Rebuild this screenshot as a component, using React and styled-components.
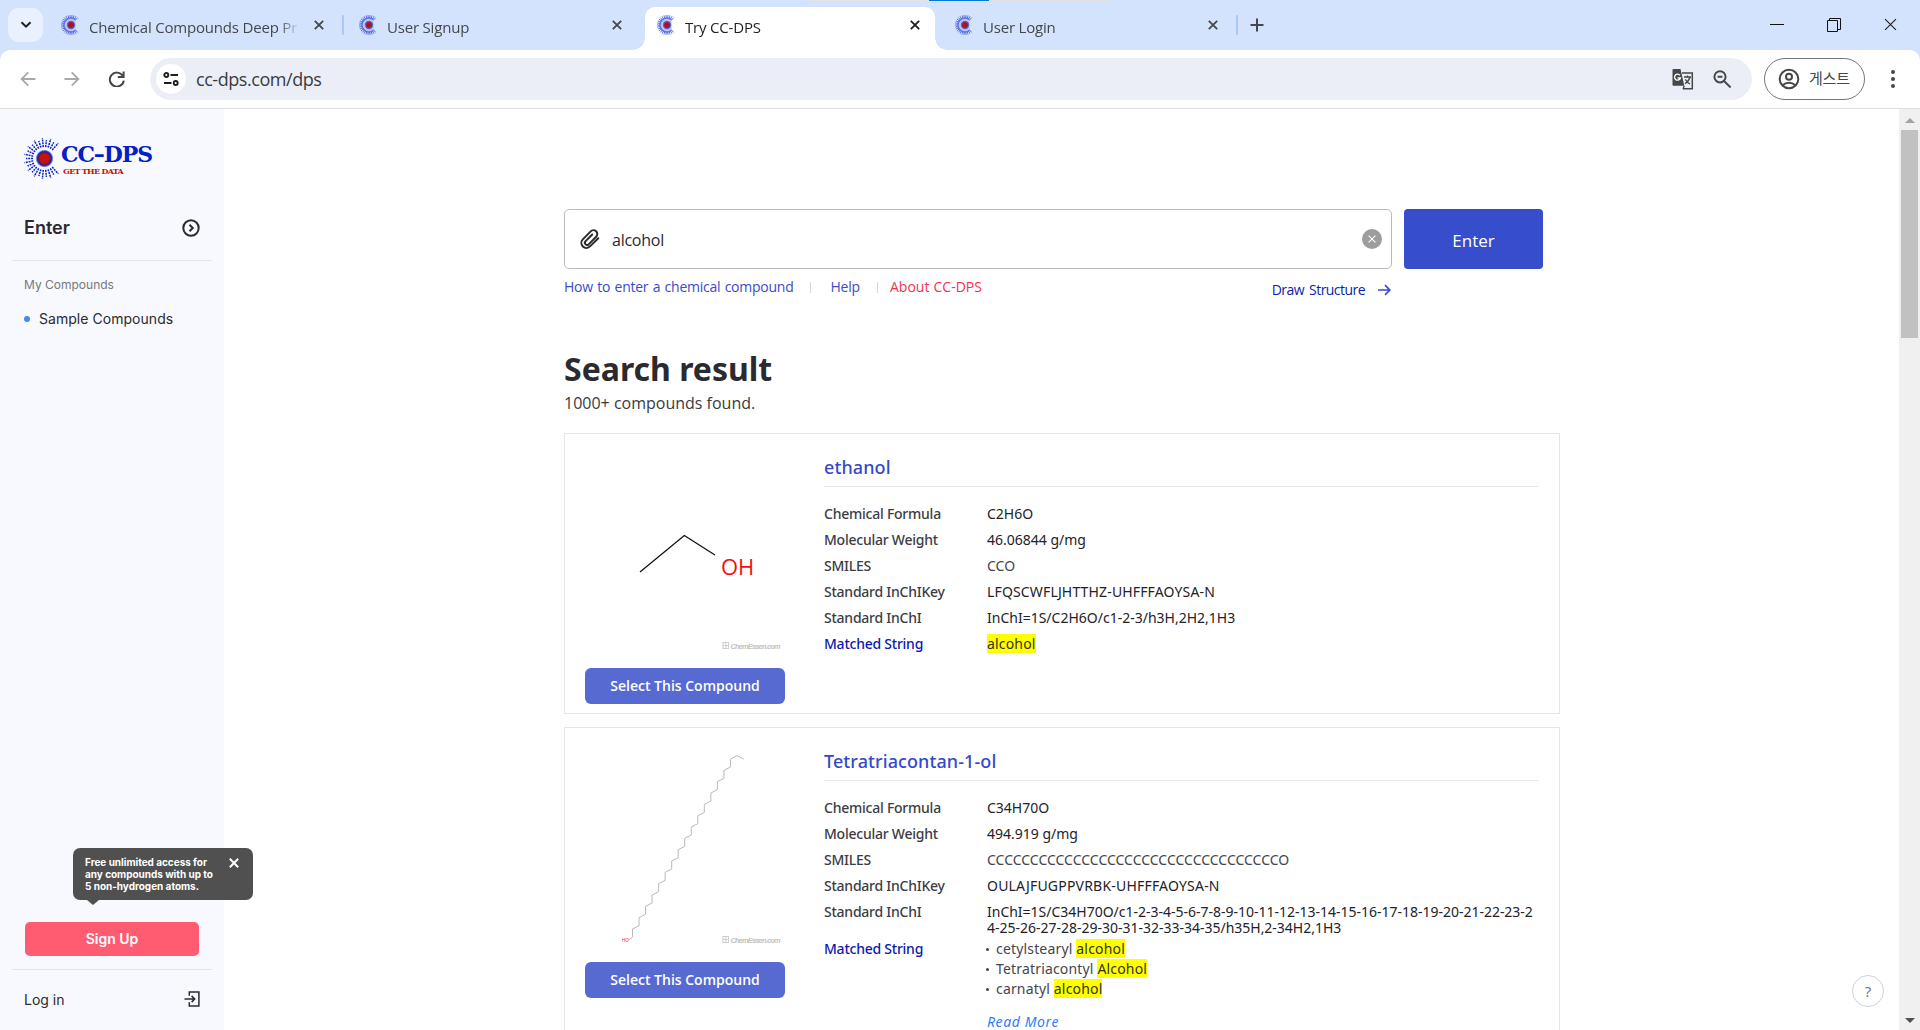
import React from "react";
import styled, { createGlobalStyle, css } from "styled-components";

const sans = `"Open Sans", "Noto Sans", "Noto Sans CJK KR", sans-serif`;
const noto = `"Noto Sans", "Open Sans", sans-serif`;
const inter = `Inter, "Liberation Sans", sans-serif`;

const GlobalStyle = createGlobalStyle`
  *, *::before, *::after { box-sizing: border-box; }
  html, body { margin: 0; height: 100%; overflow: hidden; background: #fff; }
  svg { display: block; flex: none; }
  button { border: 0; padding: 0; background: none; font: inherit; color: inherit; }
`;

const Window = styled.div`
  display: flex;
  flex-direction: column;
  width: 1920px;
  height: 1030px;
  overflow: hidden;
  background: #d3e3fd;
  font-family: ${sans};
`;

/* ---------- tab strip ---------- */

const TabStrip = styled.header`
  position: relative;
  display: flex;
  height: 50px;
  padding-left: 8px;
`;

const LoadingMark = styled.div`
  position: absolute;
  top: 0;
  left: 809px;
  width: 301px;
  height: 1px;
  background: linear-gradient(90deg, #e3e3e3 120px, #0078d7 120px 180px, #e3e3e3 180px);
`;

const TabSearch = styled.button`
  display: grid;
  place-items: center;
  width: 35px;
  height: 34px;
  margin: 8px 6px 0 0;
  border-radius: 11px;
  background: #e9f1fe;
`;

const Tabs = styled.nav`
  display: flex;
  gap: 8px;
`;

const Tab = styled.div`
  position: relative;
  display: flex;
  align-items: center;
  width: 290px;
  height: 43px;
  margin-top: 7px;
  padding: 0 15px 7px 12px;
  color: #45474a;

  ${(p) =>
    p.$active &&
    css`
      color: #1f1f1f;
      background: #fff;
      border-radius: 10px 10px 0 0;
      &::before,
      &::after {
        content: "";
        position: absolute;
        bottom: 0;
        width: 12px;
        height: 12px;
      }
      &::before {
        left: -12px;
        background: radial-gradient(circle at 0 0, transparent 11.5px, #fff 12px);
      }
      &::after {
        right: -12px;
        background: radial-gradient(circle at 100% 0, transparent 11.5px, #fff 12px);
      }
    `}

  ${(p) =>
    p.$divided &&
    css`
      &::after {
        content: "";
        position: absolute;
        top: 8px;
        right: -5px;
        width: 2px;
        height: 20px;
        border-radius: 1px;
        background: #a8c7fa;
      }
    `}
`;

const TabTitle = styled.span`
  width: 211px;
  height: 20px;
  margin: 4px 0 0 10px;
  overflow: hidden;
  white-space: nowrap;
  font-size: 15px;
  line-height: 20px;
  letter-spacing: -0.19px;
  mask-image: linear-gradient(90deg, #000 190px, transparent 211px);
`;

const TabClose = styled.span`
  margin-left: auto;
`;

const NewTab = styled.button`
  align-self: flex-start;
  margin: 18px 0 0 17px;
`;

const WindowButtons = styled.div`
  display: flex;
  align-items: flex-start;
  gap: 43px;
  margin: 18px 23px 0 auto;
`;

/* ---------- toolbar ---------- */

const Toolbar = styled.div`
  display: flex;
  align-items: center;
  height: 59px;
  padding: 0 25px 0 20px;
  border-bottom: 1px solid #dfdfdf;
  border-radius: 10px 10px 0 0;
  background: #fff;
`;

const NavButtons = styled.div`
  display: flex;
  gap: 28px;
`;

const AddressBar = styled.div`
  display: flex;
  align-items: center;
  width: 1602px;
  height: 42px;
  margin-left: 24px;
  padding: 0 20px 0 6px;
  border-radius: 21px;
  background: #ebeef7;
`;

const SiteInfo = styled.span`
  display: grid;
  place-items: center;
  width: 30px;
  height: 30px;
  border-radius: 50%;
  background: #fff;
`;

const Url = styled.span`
  flex: 1;
  margin-left: 10px;
  font-size: 18px;
  line-height: 24px;
  letter-spacing: -0.45px;
  color: #3a3b3e;
`;

const AddressActions = styled.span`
  display: flex;
  align-items: center;
  gap: 19px;
`;

const Profile = styled.button`
  display: flex;
  align-items: center;
  gap: 9px;
  width: 101px;
  height: 42px;
  margin-left: 12px;
  padding-left: 13px;
  border: 1px solid #747775;
  border-radius: 21px;
  color: #45474a;
  font: 400 15px/20px "Noto Sans CJK KR", sans-serif;
  letter-spacing: -0.2px;

  & > span {
    margin-top: -2px;
  }
`;

const MenuDots = styled.span`
  display: flex;
  flex-direction: column;
  gap: 3px;
  margin-left: auto;
`;

const Dot = styled.i`
  width: 4px;
  height: 4px;
  border-radius: 50%;
  background: #45474a;
`;

/* ---------- page frame ---------- */

const Page = styled.div`
  display: flex;
  height: 921px;
  background: #fff;
`;

const Sidebar = styled.aside`
  position: relative;
  display: flex;
  flex-direction: column;
  width: 224px;
  padding: 29px 12px 21px;
  background: #f8f9fe;
  font-family: ${inter};
  color: #2a2a30;
`;

const Brand = styled.div`
  display: flex;
  height: 42px;
  padding-left: 11px;
`;

const BrandText = styled.div`
  display: flex;
  flex-direction: column;
  margin-left: -3px;
  font-family: "DejaVu Serif", serif;
  font-weight: 700;
  white-space: nowrap;
`;

const BrandName = styled.span`
  padding: 4px 0 0 1px;
  font-size: 22px;
  line-height: 24px;
  letter-spacing: -1.1px;
  color: #0420c4;
`;

const BrandTagline = styled.span`
  padding-left: 3px;
  font-size: 8px;
  line-height: 10px;
  letter-spacing: -0.7px;
  color: #c2130b;
`;

const SideRow = styled.div`
  display: flex;
  align-items: center;
  justify-content: space-between;
  padding: 0 12px;
`;

const EnterRow = styled(SideRow)`
  height: 24px;
  margin-top: 36px;
  font-size: 18px;
  font-weight: 600;

  & > span {
    margin-top: -2px;
  }
`;

const LoginRow = styled(SideRow)`
  height: 20px;
  margin-top: 19px;
  font-size: 14px;
`;

const SideRule = styled.hr`
  width: 200px;
  height: 1px;
  margin: ${(p) => p.$top}px 0 0;
  border: 0;
  background: #e2e3e8;
`;

const SideHeading = styled.h2`
  margin: 16px 0 0 12px;
  font-size: 12px;
  font-weight: 400;
  line-height: 16px;
  color: #77787d;
`;

const SideItem = styled.a`
  display: flex;
  align-items: center;
  gap: 9px;
  margin: 16px 0 0 12px;
  font-size: 14px;
  line-height: 20px;
  letter-spacing: 0.04px;

  &::before {
    content: "";
    width: 6px;
    height: 6px;
    border-radius: 50%;
    background: #3b8cf0;
  }
`;

const SignUp = styled.button`
  height: 34px;
  margin: auto 13px 0;
  padding-bottom: 2px;
  border-radius: 5px;
  background: #ff5c72;
  color: #fff;
  font-size: 14px;
  font-weight: 600;
`;

const Hint = styled.div`
  position: absolute;
  top: 739px;
  left: 73px;
  z-index: 2;
  display: flex;
  justify-content: space-between;
  width: 180px;
  height: 52px;
  padding: 8px 14px 0 12px;
  border-radius: 7px;
  background: #505050;
  color: #fff;
  font-size: 10px;
  font-weight: 700;
  line-height: 12px;
  letter-spacing: -0.03px;
  white-space: nowrap;

  & > svg {
    margin-top: 2px;
  }

  &::after {
    content: "";
    position: absolute;
    top: 52px;
    left: 14px;
    border: 6px solid transparent;
    border-top: 5px solid #505050;
    border-bottom: 0;
  }
`;

const Main = styled.main`
  position: relative;
  flex: 1;
  padding: 100px 0 0 340px;
  overflow: hidden;
`;

const Scrollbar = styled.div`
  display: flex;
  flex-direction: column;
  align-items: center;
  width: 21px;
  padding: 9px 0 7px;
  background: #f0f0f0;
`;

const ScrollThumb = styled.div`
  width: 17px;
  height: 208px;
  margin: 7px 0 auto;
  background: #c1c1c1;
`;

const HelpBubble = styled.button`
  position: absolute;
  right: 15px;
  bottom: 23px;
  width: 32px;
  height: 32px;
  border: 1px solid #cdd1e2;
  border-radius: 50%;
  background: #fff;
  color: #6d6f73;
  font-size: 15px;
`;

/* ---------- search ---------- */

const SearchRow = styled.div`
  display: flex;
  gap: 12px;
`;

const SearchBox = styled.div`
  display: flex;
  align-items: center;
  width: 828px;
  height: 60px;
  padding: 0 9px 0 15px;
  border: 1px solid #bcbcbe;
  border-radius: 5px;
`;

const Query = styled.span`
  flex: 1;
  margin: 2px 0 0 12px;
  font-size: 16px;
  line-height: 24px;
  letter-spacing: -0.25px;
  color: #2a2a30;
`;

const ClearButton = styled.button`
  display: grid;
  place-items: center;
  width: 20px;
  height: 20px;
  border-radius: 50%;
  background: #9d9c9f;
`;

const SubmitButton = styled.button`
  width: 139px;
  height: 60px;
  padding-top: 2px;
  border-radius: 4px;
  background: #364dcc;
  color: #fff;
  font-size: 17px;
`;

const LinkRow = styled.div`
  display: flex;
  align-items: flex-start;
  width: 828px;
  height: 23px;
  margin-top: 8px;
  font-size: 14px;
  line-height: 20px;
  white-space: nowrap;
`;

const HelpLink = styled.a`
  color: ${(p) => (p.$alert ? "#f5304f" : "#3a4bcb")};
  letter-spacing: ${(p) => p.$track || 0}px;
  word-spacing: ${(p) => p.$words || 0}px;
`;

const LinkBar = styled.i`
  width: 1px;
  height: 11px;
  margin: 5px ${(p) => p.$after}px 0 ${(p) => p.$before}px;
  background: #d3d5e2;
`;

const DrawLink = styled.a`
  display: flex;
  align-items: center;
  gap: 13px;
  margin: 3px 1px 0 auto;
  color: #0b1fa8;
  letter-spacing: -0.55px;
  word-spacing: 2px;
`;

/* ---------- results ---------- */

const Title = styled.h1`
  margin: 47px 0 0;
  font: 700 32px/44px ${noto};
  color: #2a2a30;
`;

const Count = styled.p`
  margin: 0;
  font-size: 16px;
  line-height: 24px;
  color: #3a3a40;
`;

const Results = styled.section`
  display: flex;
  flex-direction: column;
  gap: 13px;
  margin-top: 18px;
`;

const Card = styled.article`
  display: flex;
  width: 996px;
  min-height: 281px;
  padding: 0 21px 8px 20px;
  border: 1px solid #e4e5ea;
`;

const Preview = styled.div`
  display: flex;
  flex-direction: column;
  width: 200px;
`;

const SelectButton = styled.button`
  height: 36px;
  padding-bottom: 2px;
  border-radius: 6px;
  background: #566ad2;
  color: #fff;
  font-size: 14px;
  font-weight: 600;
`;

const Details = styled.div`
  flex: 1;
  margin-left: 39px;
  padding-top: 20px;
  font-family: ${noto};
`;

const Name = styled.h3`
  margin: 0 0 18.5px;
  padding-bottom: 6px;
  border-bottom: 1px solid #e6e7ea;
  font-size: 18px;
  font-weight: 500;
  line-height: 26px;
  letter-spacing: 0.09px;
  color: #3549cb;
`;

const Field = styled.div`
  display: grid;
  grid-template-columns: 163px 1fr;
  min-height: 26px;
  padding-bottom: 5px;
  font-size: 14px;
  line-height: 16px;
`;

const Label = styled.span`
  font-weight: 500;
  letter-spacing: -0.24px;
  color: ${(p) => (p.$accent ? "#0b1bb0" : "#3c3c44")};
`;

const Value = styled.span`
  color: ${(p) => (p.$soft ? "#45454c" : "#222228")};
  letter-spacing: ${(p) => p.$track || 0}px;
  word-break: break-all;
`;

const Mark = styled.mark`
  background: #ff0;
  color: #33331a;
`;

const MatchList = styled.ul`
  margin: -2px 0 15px;
  padding: 0;
  list-style: none;
  line-height: 20px;
  letter-spacing: 0.17px;
  color: #45454c;
`;

const Match = styled.li`
  display: flex;
  align-items: center;
  white-space: pre;

  &::before {
    content: "";
    width: 3px;
    height: 3px;
    margin: 1px 7px 0 -1px;
    border-radius: 50%;
    background: #45454c;
  }
`;

const ReadMore = styled.a`
  font-style: italic;
  letter-spacing: 0.6px;
  color: #2b7fff;
`;

/* ---------- drawings ---------- */

const Cross = ({ size = 10, color = "#45474a", width = 1.8 }) => (
  <svg width={size} height={size} viewBox="0 0 10 10" stroke={color} strokeWidth={width}>
    <path d="M.8.8 9.2 9.2M9.2.8.8 9.2" />
  </svg>
);

const rays = Array.from({ length: 23 }, (_, i) => ((48 + i * 12) * Math.PI) / 180);

const Burst = () => (
  <svg width="40" height="42" viewBox="-21.5 -20.5 40 42">
    <defs>
      <radialGradient id="core">
        <stop offset="0.5" stopColor="#c41408" />
        <stop offset="0.7" stopColor="#4a1a70" />
        <stop offset="0.8" stopColor="#1b2fc0" />
        <stop offset="1" stopColor="#1b2fc0" stopOpacity="0.1" />
      </radialGradient>
    </defs>
    {rays.map((a, i) => {
      const end = i % 2 ? 18.5 : 20.5;
      return (
        <line
          key={i}
          x1={Math.cos(a) * 11.5}
          y1={Math.sin(a) * 11.5}
          x2={Math.cos(a) * end}
          y2={Math.sin(a) * end}
          stroke="#0c22c0"
          strokeWidth="1.5"
          strokeDasharray="2 .8"
        />
      );
    })}
    <circle r="9" fill="url(#core)" />
  </svg>
);

const Favicon = () => (
  <svg width="18" height="20" viewBox="-10 -10 18 20">
    {rays.map((a, i) => (
      <line
        key={i}
        x1={Math.cos(a) * 6}
        y1={Math.sin(a) * 6}
        x2={Math.cos(a) * 10}
        y2={Math.sin(a) * 10}
        stroke="#5a6fe0"
        strokeWidth="1"
      />
    ))}
    <path d="M4.6-5.2A7 7 0 1 0 4.6 5.2" fill="#b9c6f7" stroke="#5f75e0" strokeWidth="1.5" />
    <circle r="4.2" fill="#5168d8" />
    <circle r="3" fill="#b3121c" />
  </svg>
);

const GridMark = () => (
  <path d="M137.5 208.5h6.5M137.5 211.5h6.5M137.5 214.5h6.5M138 208v7M140.8 208v7M143.5 208v7" stroke="#cfcfcf" fill="none" />
);

const Watermark = styled.text`
  font: italic 700 7.4px "Liberation Sans", sans-serif;
  fill: #c2c2c2;
`;

const AtomLabel = styled.text`
  font: ${(p) => p.$size}px ${sans};
  fill: #f80d0d;
`;

const chain = ["43.5,506.3", "47.5,503"];
for (let i = 0; i < 16; i += 1) {
  const x = 47.5 + 6.53 * i;
  chain.push(`${x},${503 - 11.33 * i}`, `${x},${495 - 11.33 * i}`);
}
chain.push("152,321.6", "158.7,325");

const Ethanol = () => (
  <svg width="200" height="234" fill="none">
    <path d="M55 138 99.3 101.5 130 121" stroke="#111" strokeWidth="1.3" />
    <AtomLabel $size={22} x="136" y="141">OH</AtomLabel>
    <GridMark />
    <Watermark x="145.5" y="214.5" textLength="50">ChemEssen.com</Watermark>
  </svg>
);

const LongChain = () => (
  <svg width="200" height="234" fill="none">
    <polyline points={chain.join(" ")} transform="translate(0 -294)" stroke="#b9b9b9" />
    <AtomLabel $size={4.5} x="37" y="214">HO</AtomLabel>
    <GridMark />
    <Watermark x="145.5" y="214.5" textLength="50">ChemEssen.com</Watermark>
  </svg>
);

/* ---------- content ---------- */

const tabs = [
  { title: "Chemical Compounds Deep Pr", divided: true },
  { title: "User Signup" },
  { title: "Try CC-DPS", active: true },
  { title: "User Login", divided: true },
];

const compounds = [
  {
    name: "ethanol",
    Drawing: Ethanol,
    fields: [
      { label: "Chemical Formula", value: "C2H6O" },
      { label: "Molecular Weight", value: "46.06844 g/mg" },
      { label: "SMILES", value: "CCO", soft: true },
      { label: "Standard InChIKey", value: "LFQSCWFLJHTTHZ-UHFFFAOYSA-N", track: 0.15 },
      { label: "Standard InChI", value: "InChI=1S/C2H6O/c1-2-3/h3H,2H2,1H3" },
    ],
    match: "alcohol",
  },
  {
    name: "Tetratriacontan-1-ol",
    Drawing: LongChain,
    fields: [
      { label: "Chemical Formula", value: "C34H70O" },
      { label: "Molecular Weight", value: "494.919 g/mg" },
      { label: "SMILES", value: `${"C".repeat(34)}O`, soft: true },
      { label: "Standard InChIKey", value: "OULAJFUGPPVRBK-UHFFFAOYSA-N", track: 0.2 },
      {
        label: "Standard InChI",
        value:
          "InChI=1S/C34H70O/c1-2-3-4-5-6-7-8-9-10-11-12-13-14-15-16-17-18-19-20-21-22-23-24-25-26-27-28-29-30-31-32-33-34-35/h35H,2-34H2,1H3",
        track: -0.01,
      },
    ],
    matches: [
      ["cetylstearyl ", "alcohol"],
      ["Tetratriacontyl ", "Alcohol"],
      ["carnatyl ", "alcohol"],
    ],
  },
];

function Browser() {
  return (
    <>
      <TabStrip>
        <LoadingMark />
        <TabSearch>
          <svg width="12" height="8" fill="none" stroke="#1f1f1f" strokeWidth="2">
            <path d="m1.5 1.2 4.5 4.5 4.5-4.5" />
          </svg>
        </TabSearch>
        <Tabs>
          {tabs.map((t) => (
            <Tab key={t.title} $active={t.active} $divided={t.divided}>
              <Favicon />
              <TabTitle>{t.title}</TabTitle>
              <TabClose>
                <Cross color={t.active ? "#1f1f1f" : "#45474a"} />
              </TabClose>
            </Tab>
          ))}
        </Tabs>
        <NewTab>
          <svg width="14" height="14" stroke="#45474a" strokeWidth="2">
            <path d="M7 .5v13M.5 7h13" />
          </svg>
        </NewTab>
        <WindowButtons>
          <svg width="14" height="14" stroke="#111">
            <path d="M0 6.5h14" />
          </svg>
          <svg width="14" height="14" fill="none" stroke="#111">
            <path d="M.5 2.5h10v11H.5zM2.5 2.5v-2h11v11h-3" />
          </svg>
          <Cross size={13} color="#222" width={0.9} />
        </WindowButtons>
      </TabStrip>
      <Toolbar>
        <NavButtons>
          <svg width="16" height="16" fill="none" stroke="#a9a9ab" strokeWidth="1.8">
            <path d="M15.5 8H2M8.3 1.3 1.6 8l6.7 6.7" />
          </svg>
          <svg width="16" height="16" fill="none" stroke="#a9a9ab" strokeWidth="1.8">
            <path d="M.5 8H14M7.7 1.3 14.4 8l-6.7 6.7" />
          </svg>
          <svg width="18" height="16" fill="none" stroke="#45474a" strokeWidth="2">
            <path d="M14.6 4.6A7 7 0 1 0 15.8 9.6M15.6.5v5.4h-5.8" />
          </svg>
        </NavButtons>
        <AddressBar>
          <SiteInfo>
            <svg width="16" height="14" fill="none" stroke="#1f1f1f" strokeWidth="1.9">
              <circle cx="3.3" cy="3" r="2" />
              <path d="M7.5 3H15M1 11h7.5" />
              <circle cx="12.7" cy="11" r="2" />
            </svg>
          </SiteInfo>
          <Url>cc-dps.com/dps</Url>
          <AddressActions>
            <svg width="22" height="22" viewBox="0 0 22 22">
              <path d="M10 5h10.3v15.8H11" fill="none" stroke="#45474a" strokeWidth="1.5" />
              <path d="M1.5 1h7l3.8 16.8H1.5a1 1 0 0 1-1-1V2a1 1 0 0 1 1-1Z" fill="#45474a" />
              <path d="M7.9 7.3A3 3 0 1 0 8.4 10H5.6" fill="none" stroke="#fff" strokeWidth="1.4" />
              <path d="M12 9h7M15.4 7.4V9M18 9c-.7 3-2.4 5-5 6.7M13.4 11.4c1 2 2.6 3.6 4.6 4.6M12.3 17.8 11 21" fill="none" stroke="#45474a" strokeWidth="1.3" />
            </svg>
            <svg width="19" height="18" fill="none" stroke="#45474a" strokeWidth="2">
              <circle cx="7" cy="6.8" r="5.6" />
              <path d="m11 11 6.6 6.4M4.6 6.8h4.8" />
            </svg>
          </AddressActions>
        </AddressBar>
        <Profile>
          <svg width="22" height="22" viewBox="0 0 22 22" fill="none" stroke="#45474a" strokeWidth="2">
            <circle cx="11" cy="11" r="9.3" />
            <circle cx="11" cy="8.8" r="3" />
            <path d="M4.6 17.2c3.6-3.4 9.2-3.4 12.8 0" />
          </svg>
          <span>게스트</span>
        </Profile>
        <MenuDots>
          <Dot />
          <Dot />
          <Dot />
        </MenuDots>
      </Toolbar>
    </>
  );
}

function SideNav() {
  return (
    <Sidebar>
      <Brand>
        <Burst />
        <BrandText>
          <BrandName>CC–DPS</BrandName>
          <BrandTagline>GET THE DATA</BrandTagline>
        </BrandText>
      </Brand>
      <EnterRow>
        <span>Enter</span>
        <svg width="18" height="18" fill="none" stroke="#2a2a30" strokeWidth="2">
          <circle cx="9" cy="9" r="7.7" />
          <path d="m7.5 5.7 3.3 3.3-3.3 3.3" />
        </svg>
      </EnterRow>
      <SideRule $top={20} />
      <SideHeading>My Compounds</SideHeading>
      <SideItem>Sample Compounds</SideItem>
      <Hint>
        <span>
          Free unlimited access for
          <br />
          any compounds with up to
          <br />5 non-hydrogen atoms.
        </span>
        <Cross color="#fff" width={2} />
      </Hint>
      <SignUp>Sign Up</SignUp>
      <SideRule $top={13} />
      <LoginRow>
        Log in
        <svg width="16" height="16" fill="none" stroke="#2a2a30" strokeWidth="1.5">
          <path d="M5.3 4.8V1h9.6v14H5.3v-3.8M.5 8h10M7.6 4.9 10.7 8l-3.1 3.1" />
        </svg>
      </LoginRow>
    </Sidebar>
  );
}

function Compound({ name, Drawing, fields, match, matches }) {
  return (
    <Card>
      <Preview>
        <Drawing />
        <SelectButton>Select This Compound</SelectButton>
      </Preview>
      <Details>
        <Name>{name}</Name>
        {fields.map(({ label, value, soft, track }) => (
          <Field key={label}>
            <Label>{label}</Label>
            <Value $soft={soft} $track={track}>
              {value}
            </Value>
          </Field>
        ))}
        <Field>
          <Label $accent>Matched String</Label>
          {match ? (
            <Value $track={0.17}>
              <Mark>{match}</Mark>
            </Value>
          ) : (
            <div>
              <MatchList>
                {matches.map(([before, hit]) => (
                  <Match key={before}>
                    <span>
                      {before}
                      <Mark>{hit}</Mark>
                    </span>
                  </Match>
                ))}
              </MatchList>
              <ReadMore>Read More</ReadMore>
            </div>
          )}
        </Field>
      </Details>
    </Card>
  );
}

export default function App() {
  return (
    <Window>
      <GlobalStyle />
      <Browser />
      <Page>
        <SideNav />
        <Main>
          <SearchRow>
            <SearchBox>
              <svg width="20" height="20" viewBox="0 0 20 20" fill="none" stroke="#2a2a30" strokeWidth="2" strokeLinecap="round">
                <path d="M18.3 9.2 10 17.4a5 5 0 0 1-7.2-7l7.9-8a3.8 3.8 0 0 1 5.5 5.3l-7.6 7.7a2.2 2.2 0 0 1-3.2-3l6.8-6.9" />
              </svg>
              <Query>alcohol</Query>
              <ClearButton>
                <Cross size={8} color="#fff" width={1.4} />
              </ClearButton>
            </SearchBox>
            <SubmitButton>Enter</SubmitButton>
          </SearchRow>
          <LinkRow>
            <HelpLink $track={-0.25} $words={1}>How to enter a chemical compound</HelpLink>
            <LinkBar $before={17} $after={19} />
            <HelpLink $track={-0.2}>Help</HelpLink>
            <LinkBar $before={17} $after={12} />
            <HelpLink $alert $words={0.5}>About CC-DPS</HelpLink>
            <DrawLink>
              Draw Structure
              <svg width="13" height="12" fill="none" stroke="#364dcc" strokeWidth="1.7">
                <path d="M0 6h11.5M7 1.2 11.8 6 7 10.8" />
              </svg>
            </DrawLink>
          </LinkRow>
          <Title>Search result</Title>
          <Count>1000+ compounds found.</Count>
          <Results>
            {compounds.map((c) => (
              <Compound key={c.name} {...c} />
            ))}
          </Results>
          <HelpBubble>?</HelpBubble>
        </Main>
        <Scrollbar>
          <svg width="10" height="5" fill="#a3a3a3">
            <path d="M0 5 5 0l5 5z" />
          </svg>
          <ScrollThumb />
          <svg width="10" height="5" fill="#505050">
            <path d="m0 0 5 5 5-5z" />
          </svg>
        </Scrollbar>
      </Page>
    </Window>
  );
}
